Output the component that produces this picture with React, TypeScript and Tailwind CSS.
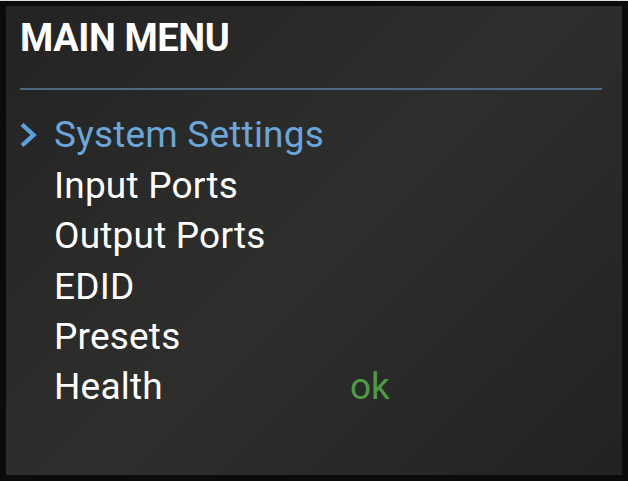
const items = [
  { label: "System Settings", active: true },
  { label: "Input Ports" },
  { label: "Output Ports" },
  { label: "EDID" },
  { label: "Presets" },
  { label: "Health", status: "ok" },
];

export default function App() {
  return (
    <div className="h-[481px] w-[628px] border-t border-[#dcdcdc] bg-[#0b0b0b] p-[6px] pt-[5px]" style={{ fontFamily: "Roboto, 'Liberation Sans', sans-serif" }}>
      <div className="flex h-full flex-col bg-[linear-gradient(135deg,#232323_0%,#2e2e2d_50%,#222222_100%)] px-[14px]">
        <h1 className="mt-[10px] text-[38px] leading-[44px] font-bold tracking-[-0.4px] text-white">MAIN MENU</h1>
        <div className="mt-[28px] h-[2px] w-[582px] bg-[#4b6a82]" />
        <ul className="mt-[20px] flex flex-col">
          {items.map((item) => (
            <li key={item.label} className="flex h-[50.4px] items-center">
              <span className="flex w-[34px] items-center">
                {item.active && (
                  <svg width="18" height="24" viewBox="0 0 18 24" fill="none">
                    <path d="M2 1.5 L13.5 12 L2 22.5" stroke="#5b9fdc" strokeWidth="4.4" strokeLinejoin="miter" />
                  </svg>
                )}
              </span>
              <span className={`w-[296px] text-[37px] tracking-[0.2px] ${item.active ? "text-[#6aa6dc]" : "text-white"}`}>{item.label}</span>
              {item.status && <span className="text-[37px] text-[#4f9a48]">{item.status}</span>}
            </li>
          ))}
        </ul>
      </div>
    </div>
  );
}
